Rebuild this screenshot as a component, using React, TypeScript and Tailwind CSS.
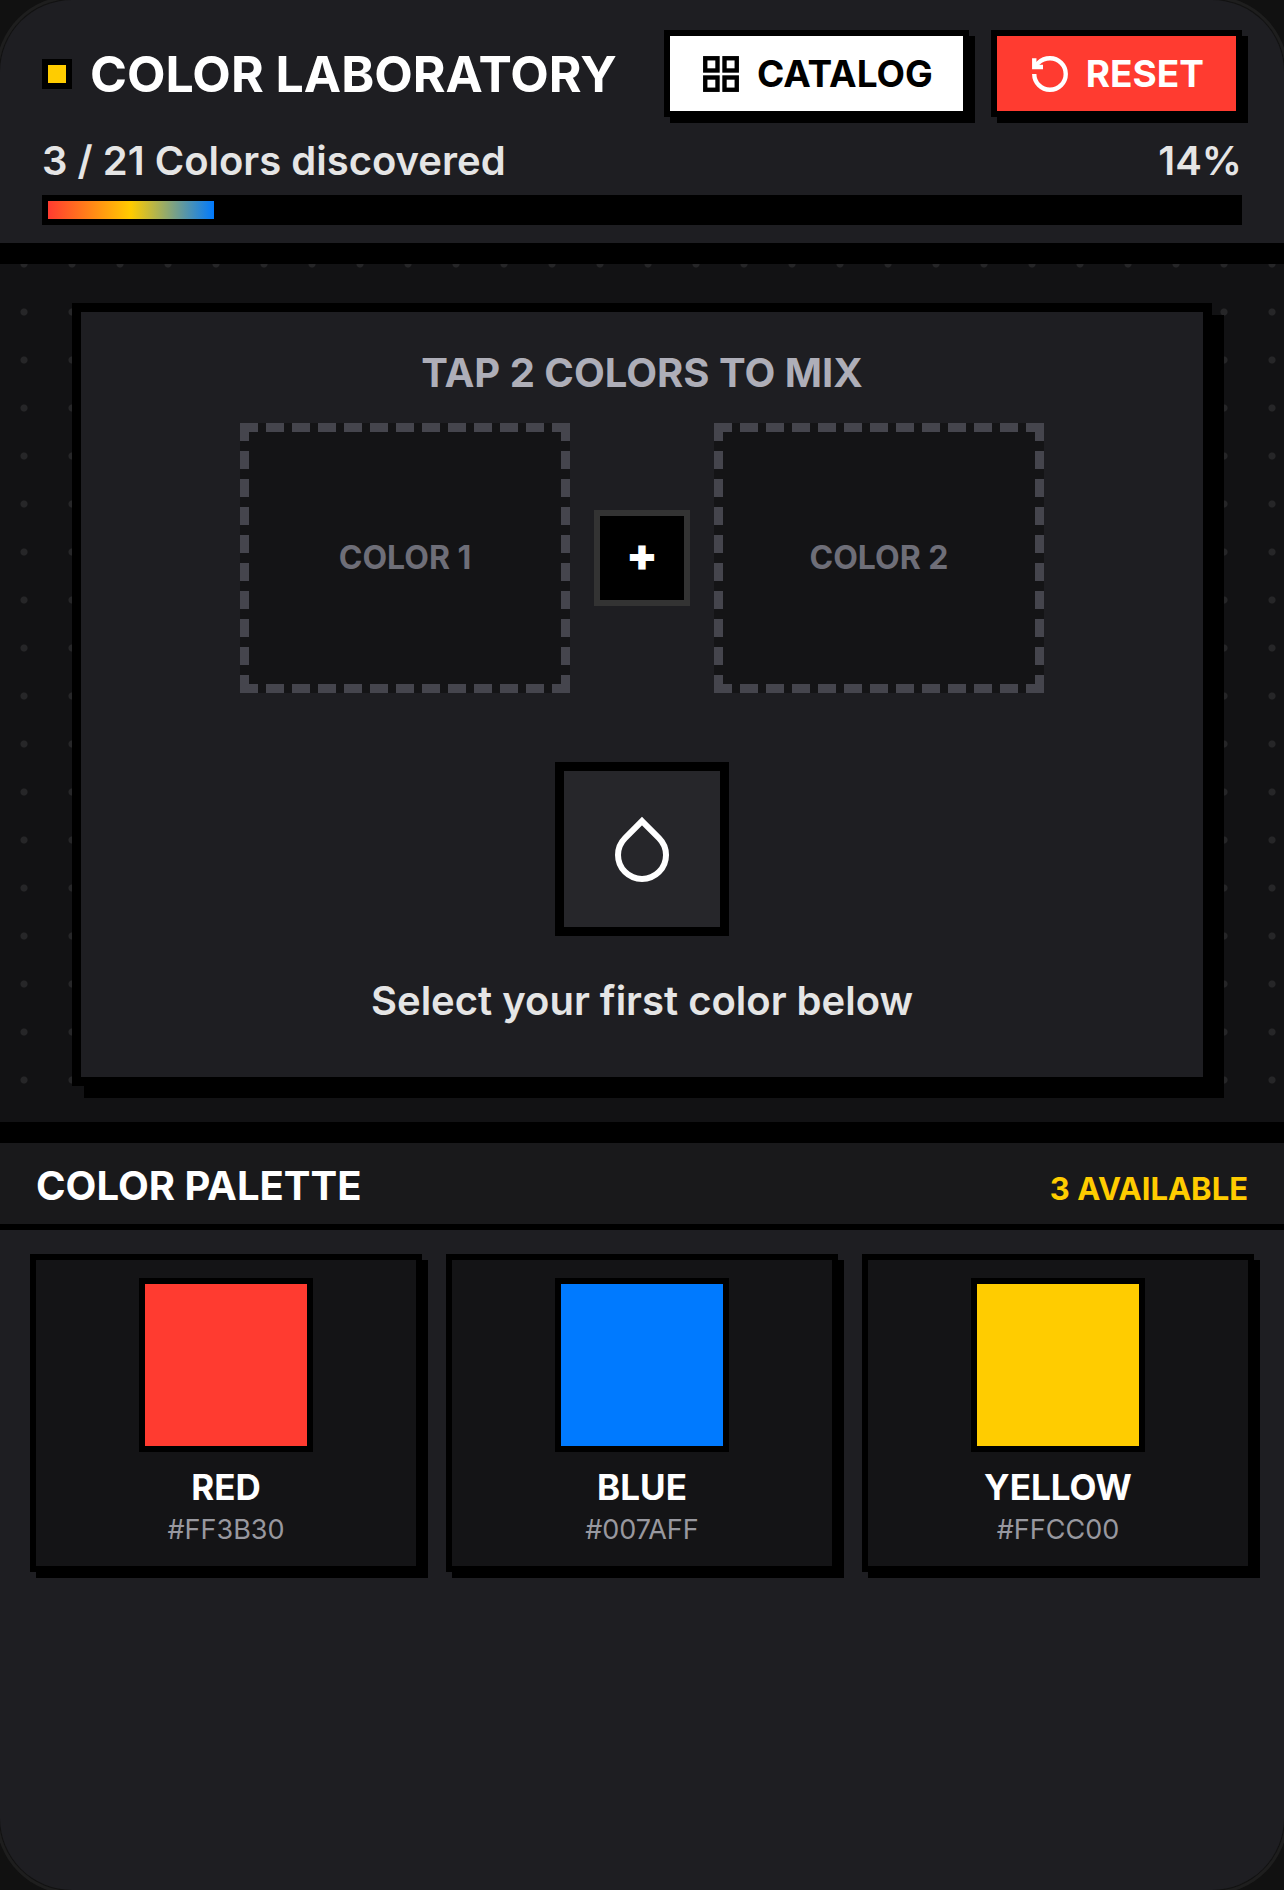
import { RotateCcw } from "lucide-react";

interface Color {
  name: string;
  hex: string;
  swatch: string;
}

const colors: Color[] = [
  { name: "RED", hex: "#FF3B30", swatch: "bg-[#ff3b30]" },
  { name: "BLUE", hex: "#007AFF", swatch: "bg-[#007aff]" },
  { name: "YELLOW", hex: "#FFCC00", swatch: "bg-[#ffcc00]" },
];

const total = 21;

function GridIcon() {
  return (
    <svg viewBox="0 0 24 24" fill="none" stroke="currentColor" strokeWidth="2.5" className="size-[42px]" aria-hidden="true">
      <rect x="3" y="3" width="7" height="7" />
      <rect x="14" y="3" width="7" height="7" />
      <rect x="14" y="14" width="7" height="7" />
      <rect x="3" y="14" width="7" height="7" />
    </svg>
  );
}

function DropIcon() {
  return (
    <svg viewBox="0 0 24 24" fill="none" stroke="currentColor" strokeWidth="2" className="size-18 text-white" aria-hidden="true">
      <path d="M12 2.69l5.66 5.66a8 8 0 1 1-11.31 0z" />
    </svg>
  );
}

function Slot({ label }: { label: string }) {
  return (
    <button
      type="button"
      className="flex h-[270px] w-[330px] items-center justify-center border-9 border-dashed border-[#45454d] bg-[#141416] text-[32px] font-bold text-[#6e6e78]"
    >
      {label}
    </button>
  );
}

function ColorCard({ name, hex, swatch }: Color) {
  return (
    <button
      type="button"
      className="flex flex-col items-center border-6 border-black bg-[#141416] px-4 pt-[18px] pb-[18px] shadow-[6px_6px_0_#000]"
    >
      <span className={`size-[174px] border-6 border-black ${swatch}`} />
      <span className="mt-[14px] text-[35px] leading-[42px] font-bold text-white">{name}</span>
      <span className="mt-1 text-[27px] leading-9 text-[#98989f]">{hex}</span>
    </button>
  );
}

export default function App() {
  const percent = Math.floor((colors.length / total) * 100);

  return (
    <div className="min-h-screen bg-[#111111] font-['Inter','Liberation_Sans',sans-serif]">
      <div className="flex min-h-screen flex-col overflow-hidden rounded-[72px] bg-[#1e1e22] shadow-[0_0_0_1px_#121212,0_0_0_4px_#1e1e1e]">
        <header className="border-b-21 border-black px-[42px] pt-[30px] pb-[18px]">
          <div className="flex items-center justify-between">
            <div className="flex items-center gap-[18px]">
              <span className="size-[30px] border-6 border-black bg-[#ffcc00]" />
              <h1 className="text-[50px] leading-[60px] font-bold whitespace-nowrap text-white">COLOR LABORATORY</h1>
            </div>
            <div className="flex gap-[22px]">
              <button
                type="button"
                className="flex h-[87px] items-center gap-[15px] border-6 border-black bg-white px-[30px] text-[37px] font-bold text-black shadow-[6px_6px_0_#000]"
              >
                <GridIcon />
                CATALOG
              </button>
              <button
                type="button"
                className="flex h-[87px] items-center gap-[15px] border-6 border-black bg-[#ff3b30] px-8 text-[37px] font-bold text-white shadow-[6px_6px_0_#000]"
              >
                <RotateCcw size={42} strokeWidth={2.5} strokeLinecap="butt" strokeLinejoin="miter" />
                RESET
              </button>
            </div>
          </div>

          <div className="mt-5 flex items-center justify-between text-[40px] leading-[48px] font-semibold text-[#e5e5e5]">
            <span>
              {colors.length} / {total} Colors discovered
            </span>
            <span>{percent}%</span>
          </div>
          <div
            role="progressbar"
            aria-label="Colors discovered"
            aria-valuenow={percent}
            className="mt-[10px] h-[30px] border-6 border-black bg-black"
          >
            <div
              className="h-full bg-linear-to-r/srgb from-[#ff3b30] via-[#ffcc00] to-[#007aff]"
              style={{ width: `${percent}%` }}
            />
          </div>
        </header>

        <main className="border-b-21 border-black bg-[#121214] bg-[radial-gradient(circle,#262628_3px,transparent_4px)] bg-size-[48px_48px] bg-position-[0_-24px] px-[72px] pt-[39px] pb-9">
          <section className="flex flex-col items-center border-9 border-black bg-[#1e1e22] pt-9 pb-[51px] shadow-[12px_12px_0_#000]">
            <h2 className="text-[40px] leading-[50px] font-bold text-[#aeaeb8]">TAP 2 COLORS TO MIX</h2>
            <div className="mt-[25px] flex items-center gap-6">
              <Slot label="COLOR 1" />
              <div className="flex size-24 items-center justify-center border-6 border-[#333333] bg-black pb-2 text-[46px] font-black text-white">
                +
              </div>
              <Slot label="COLOR 2" />
            </div>
            <div className="mt-[69px] flex size-[174px] items-center justify-center border-9 border-black bg-[#26262a]">
              <DropIcon />
            </div>
            <p className="mt-[39px] text-[40px] leading-[51px] font-semibold text-[#e5e5e5]">Select your first color below</p>
          </section>
        </main>

        <section>
          <div className="flex h-[87px] items-baseline justify-between border-b-6 border-black bg-[#19191b] px-9 pt-[18px]">
            <h2 className="text-[40px] leading-[50px] font-bold text-white">COLOR PALETTE</h2>
            <span className="text-[31px] font-bold text-[#ffcc00]">{colors.length} AVAILABLE</span>
          </div>
          <div className="grid grid-cols-3 gap-6 px-[30px] py-6">
            {colors.map((color) => (
              <ColorCard key={color.name} {...color} />
            ))}
          </div>
        </section>
      </div>
    </div>
  );
}
